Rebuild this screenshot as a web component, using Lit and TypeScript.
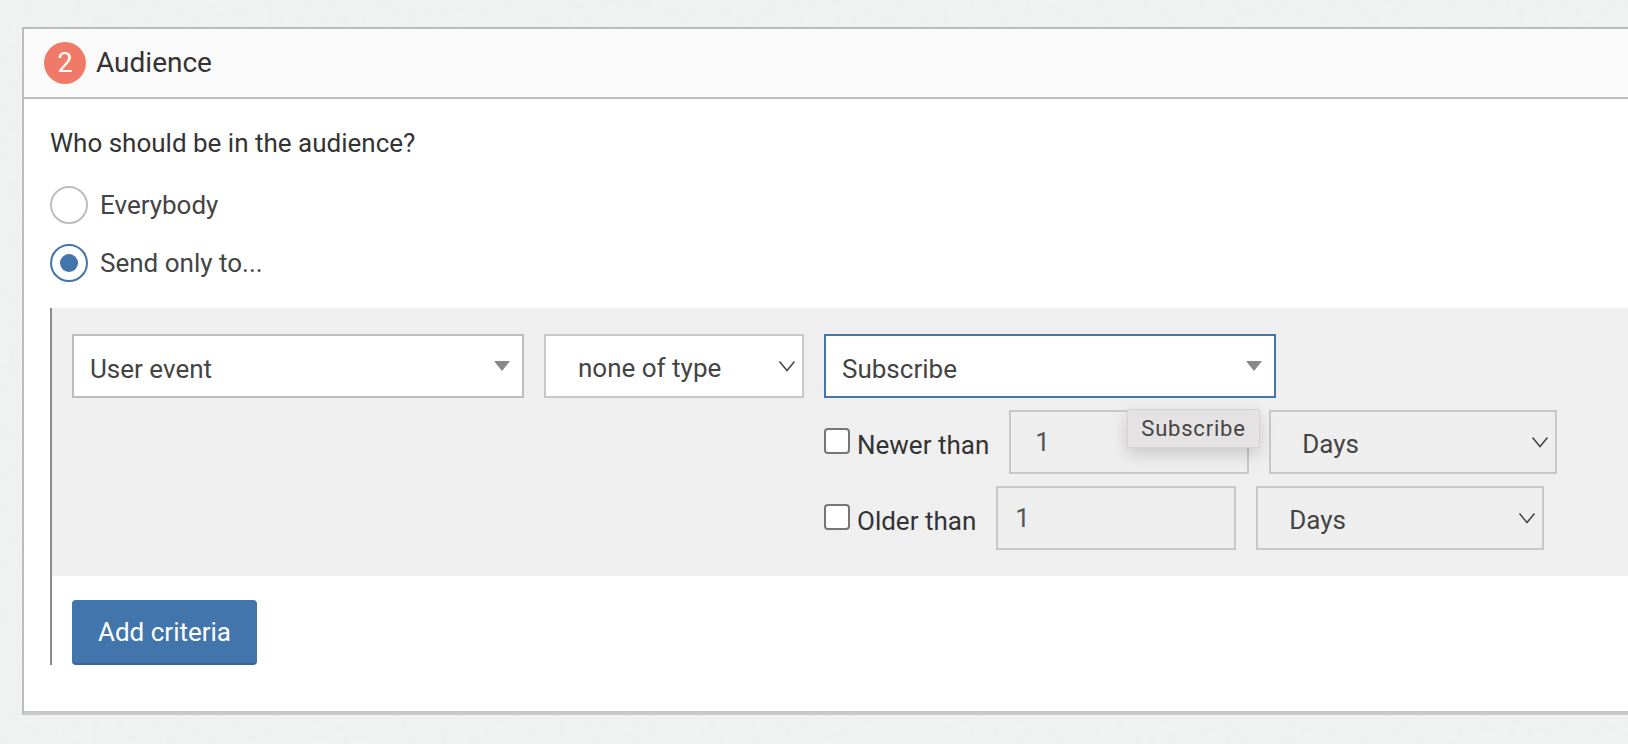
import { LitElement, html, css, svg } from "lit";
import { customElement } from "lit/decorators.js";

const chevron = svg`<svg class="chev" width="18" height="12" viewBox="0 0 18 12"><path d="M1.5 1.5 L9 10.5 L16.5 1.5" fill="none" stroke="#444" stroke-width="1.5"/></svg>`;
const paper = svg`<svg class="paper" width="1628" height="744"><filter id="n" x="0" y="0" width="100%" height="100%"><feTurbulence type="fractalNoise" baseFrequency="0.12" numOctaves="3" seed="4"/><feColorMatrix values="0 0 0 0 .5  0 0 0 0 .5  0 0 0 0 .5  .5 0 0 0 -.22"/></filter><rect width="1628" height="744" filter="url(#n)" opacity=".12"/></svg>`;

@customElement("app-root")
export class AppRoot extends LitElement {
  static styles = css`
    :host { display: block; position: relative; height: 744px; overflow: hidden; background: #f0f1f1; font-family: Roboto, "Liberation Sans", sans-serif; color: #333; padding: 27px 0 0 22px; box-sizing: border-box; }
    .paper { position: absolute; left: 0; top: 0; }
    .panel { position: relative; width: 1640px; box-sizing: border-box; background: #fff; border: 2px solid #bdbdbd; border-bottom: 4px solid #c8c8c8; height: 688px; }
    .head { height: 70px; box-sizing: border-box; background: #fafafa; border-bottom: 2px solid #bdbdbd; display: flex; align-items: center; padding: 0 0 2px 20px; }
    .badge { width: 42px; height: 42px; margin-top: 2px; border-radius: 50%; background: #f07a67; color: #fff; font-size: 27px; display: flex; align-items: center; justify-content: center; margin-right: 10px; }
    .title { font-size: 28px; color: #333; }
    .body { padding: 26px 0 0 26px; }
    .q { font-size: 26px; line-height: 36px; color: #333; margin-bottom: 25px; }
    .radio-row { display: flex; align-items: center; height: 38px; margin-bottom: 20px; font-size: 26px; color: #444; }
    .radio { width: 38px; height: 38px; box-sizing: border-box; border-radius: 50%; border: 2px solid #bdbdbd; margin-right: 12px; background: #fff; display: flex; align-items: center; justify-content: center; }
    .radio.on { border-color: #4275ac; }
    .dot { width: 18px; height: 18px; border-radius: 50%; background: #4275ac; }
    .criteria { border-left: 2px solid #8a8a8a; margin-top: 26px; }
    .grey { background: #efefef; padding: 26px 0 26px 20px; display: flex; gap: 20px; align-items: flex-start; }
    .field { box-sizing: border-box; height: 64px; border: 2px solid #bdbdbd; background: #fff; display: flex; align-items: center; font-size: 26px; color: #444; position: relative; }
    .combo { padding-left: 16px; justify-content: space-between; padding-right: 12px; }
    .combo.w1 { width: 452px; }
    .combo.w3 { width: 452px; border-color: #4275ac; }
    .combo span { padding-top: 5px; }
    .tri { width: 0; height: 0; border-left: 8px solid transparent; border-right: 8px solid transparent; border-top: 10px solid #888; }
    .native { border-color: #c8c8c8; justify-content: space-between; padding-right: 6px; }
    .native span { padding-top: 3px; }
    .w2 { width: 260px; padding-left: 32px; }
    .days { width: 288px; padding-left: 31px; background: #eee; }
    .col { display: flex; flex-direction: column; gap: 12px; position: relative; }
    .row { display: flex; align-items: center; }
    .check { width: 26px; height: 26px; box-sizing: border-box; border: 2px solid #767676; border-radius: 4px; background: #fff; margin: -2px 7px 0 0; }
    .lbl { font-size: 26px; color: #333; margin-right: 20px; padding-top: 5px; }
    .num { width: 240px; background: #eee; border-color: #c8c8c8; padding-left: 24px; margin-right: 20px; color: #555; }
    .num.second { padding-left: 17px; }
    .tip { position: absolute; left: 303px; top: 75px; width: 133px; height: 39px; box-sizing: border-box; background: #e4e2e2; border: 1px solid #d2d2d2; border-radius: 2px; box-shadow: 0 6px 16px rgba(0,0,0,.16); display: flex; align-items: center; justify-content: center; font-size: 22px; letter-spacing: .8px; color: #444; }
    .btn-wrap { padding: 24px 0 0 20px; display: flex; }
    .btn { width: 185px; height: 65px; box-sizing: border-box; background: #4275ac; border-bottom: 2px solid #3a659a; border-radius: 4px; color: #fff; font-size: 26px; display: flex; align-items: center; justify-content: center; }
  `;
  render() {
    return html`${paper}<div class="panel">
      <div class="head"><div class="badge">2</div><div class="title">Audience</div></div>
      <div class="body">
        <div class="q">Who should be in the audience?</div>
        <div class="radio-row"><div class="radio"></div>Everybody</div>
        <div class="radio-row"><div class="radio on"><div class="dot"></div></div>Send only to...</div>
        <div class="criteria">
          <div class="grey">
            <div class="field combo w1"><span>User event</span><div class="tri"></div></div>
            <div class="field native w2"><span>none of type</span>${chevron}</div>
            <div class="col">
              <div class="field combo w3"><span>Subscribe</span><div class="tri"></div></div>
              <div class="row"><div class="check"></div><div class="lbl">Newer than</div><div class="field num">1</div><div class="field native days"><span>Days</span>${chevron}</div></div>
              <div class="row"><div class="check"></div><div class="lbl">Older than</div><div class="field num second">1</div><div class="field native days"><span>Days</span>${chevron}</div></div>
              <div class="tip">Subscribe</div>
            </div>
          </div>
          <div class="btn-wrap"><div class="btn">Add criteria</div></div>
        </div>
      </div>
    </div>`;
  }
}
